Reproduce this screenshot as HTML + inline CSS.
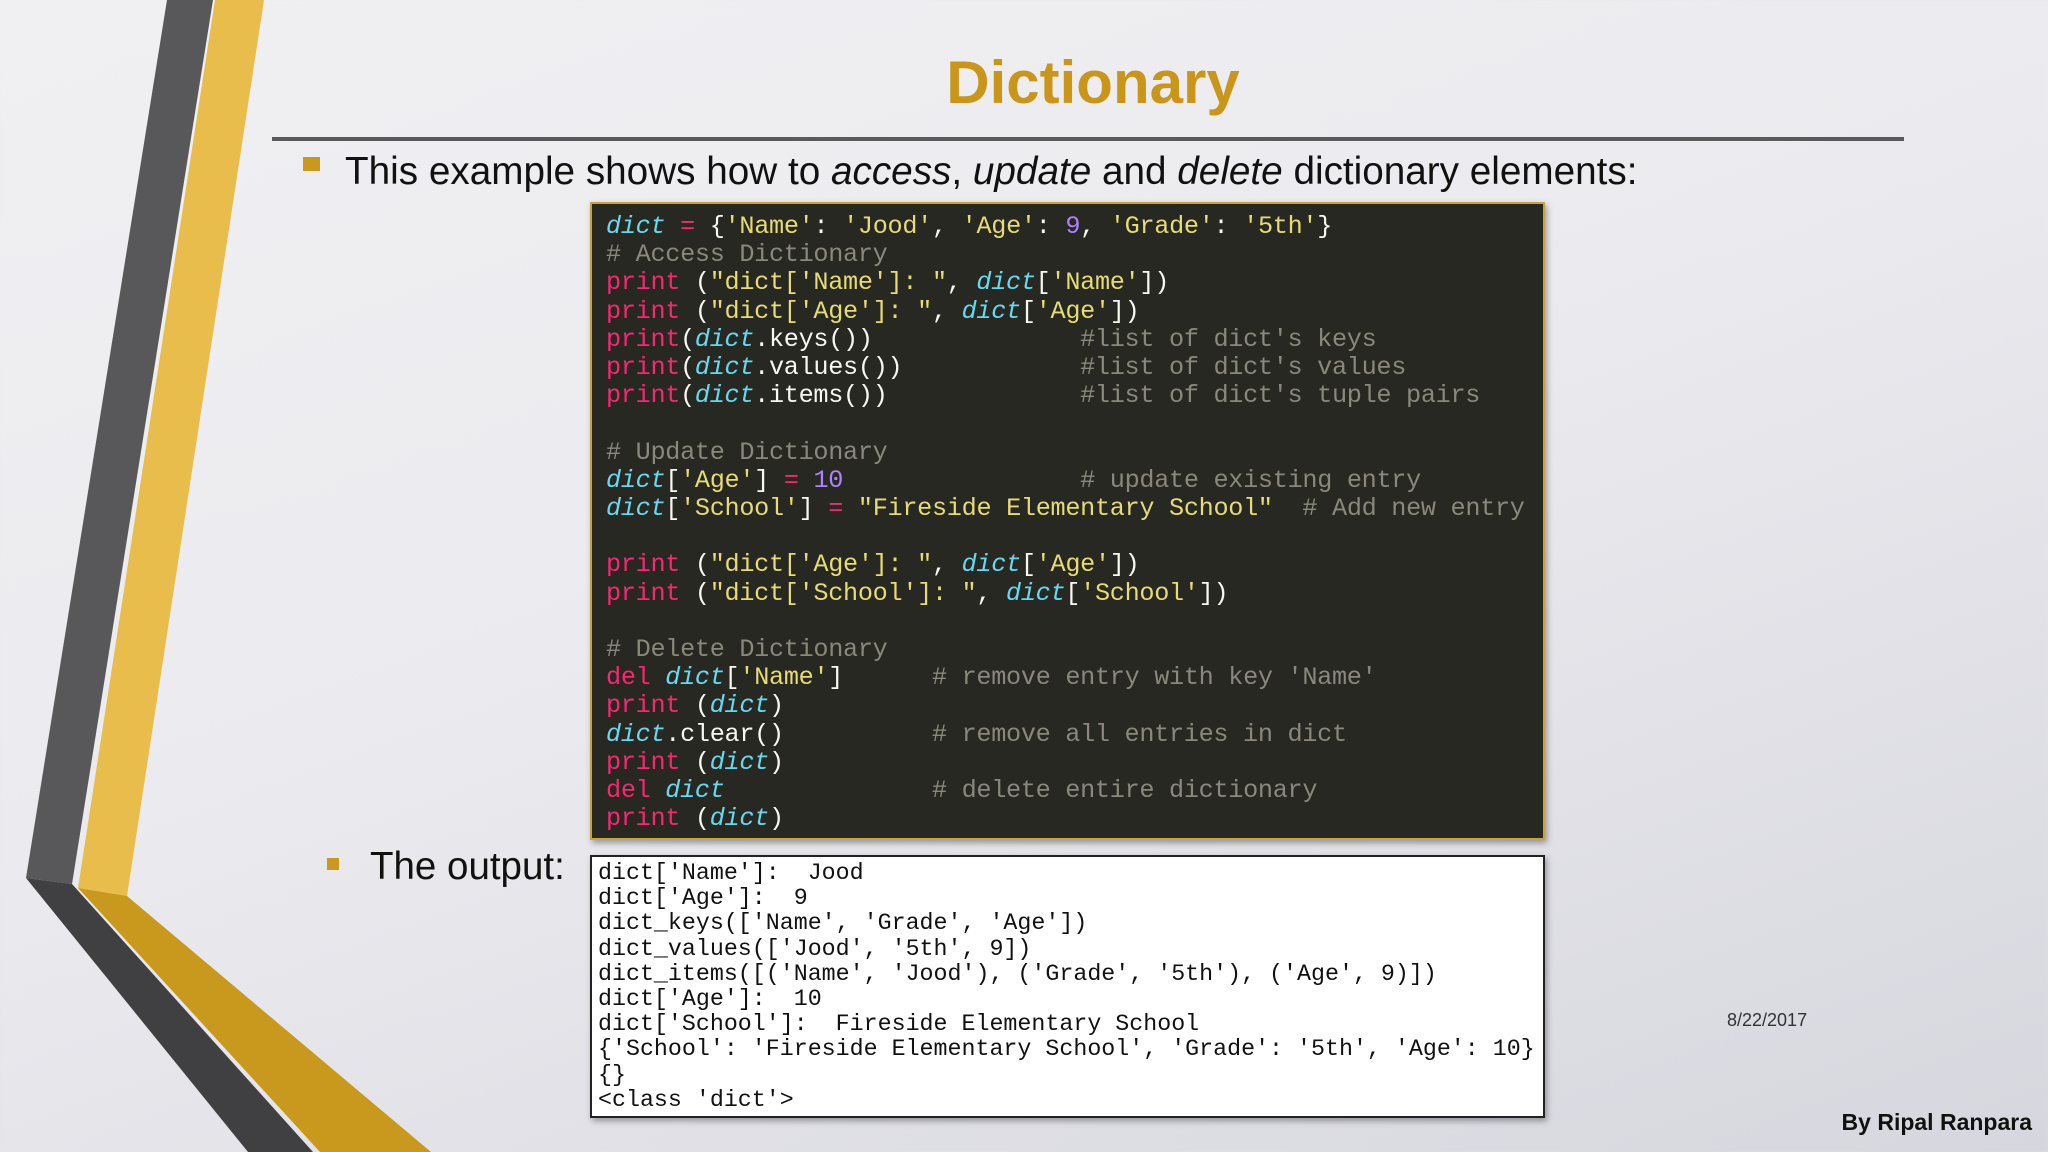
<!DOCTYPE html>
<html><head><meta charset="utf-8"><style>
*{margin:0;padding:0}
body{width:2048px;height:1152px;overflow:hidden;position:relative;background:linear-gradient(160deg,#f0f0f3 0%,#ebebef 45%,#d6d6de 100%);font-family:"Liberation Sans",sans-serif}
.abs{position:absolute}
.code{left:590px;top:202px;width:951px;height:634px;background:#272822;border:2px solid #c9a23a;box-shadow:2px 3px 6px rgba(0,0,0,.35)}
.code pre{position:absolute;left:14px;top:9px;font-family:"Liberation Mono",monospace;font-size:25.2px;letter-spacing:-0.3px;line-height:28.2px;color:#f8f8f2;white-space:pre}
.k{color:#f92672}.d{color:#66d9ef;font-style:italic}.s{color:#e6db74}.c{color:#8a887c}.n{color:#ae81ff}
.out{left:590px;top:855px;width:951px;height:259px;background:#fff;border:2px solid #222;box-shadow:2px 3px 6px rgba(0,0,0,.35)}
.out pre{position:absolute;left:6px;top:4px;font-family:"Liberation Mono",monospace;font-size:23.3px;line-height:25.2px;color:#111;white-space:pre}
</style></head><body>
<svg class="abs" style="left:0;top:0" width="600" height="1152">
<polygon points="167,0 213,0 72,884 26,878" fill="#58585b"/>
<polygon points="26,878 72,884 313,1152 248,1152" fill="#404043"/>
<polygon points="215,0 264,0 127,896 78,888" fill="#e8bd4c"/>
<polygon points="78,888 127,896 431,1152 320,1152" fill="#c9991e"/>
</svg>
<div class="abs" style="left:0;top:48px;width:2186px;text-align:center;font-size:60px;font-weight:bold;color:#c9961a">Dictionary</div>
<div class="abs" style="left:272px;top:137px;width:1632px;height:4px;background:#5a5a5c"></div>
<div class="abs" style="left:303px;top:157px;width:17px;height:14px;background:#c9991e"></div>
<div class="abs" style="left:345px;top:150px;font-size:38.7px;color:#111;white-space:nowrap">This example shows how to <i>access</i>, <i>update</i> and <i>delete</i> dictionary elements:</div>
<div class="abs code"><pre><span class="d">dict</span> <span class="k">=</span> {<span class="s">'Name'</span>: <span class="s">'Jood'</span>, <span class="s">'Age'</span>: <span class="n">9</span>, <span class="s">'Grade'</span>: <span class="s">'5th'</span>}
<span class="c"># Access Dictionary</span>
<span class="k">print</span> (<span class="s">"dict['Name']: "</span>, <span class="d">dict</span>[<span class="s">'Name'</span>])
<span class="k">print</span> (<span class="s">"dict['Age']: "</span>, <span class="d">dict</span>[<span class="s">'Age'</span>])
<span class="k">print</span>(<span class="d">dict</span>.keys())              <span class="c">#list of dict's keys</span>
<span class="k">print</span>(<span class="d">dict</span>.values())            <span class="c">#list of dict's values</span>
<span class="k">print</span>(<span class="d">dict</span>.items())             <span class="c">#list of dict's tuple pairs</span>

<span class="c"># Update Dictionary</span>
<span class="d">dict</span>[<span class="s">'Age'</span>] <span class="k">=</span> <span class="n">10</span>                <span class="c"># update existing entry</span>
<span class="d">dict</span>[<span class="s">'School'</span>] <span class="k">=</span> <span class="s">"Fireside Elementary School"</span>  <span class="c"># Add new entry</span>

<span class="k">print</span> (<span class="s">"dict['Age']: "</span>, <span class="d">dict</span>[<span class="s">'Age'</span>])
<span class="k">print</span> (<span class="s">"dict['School']: "</span>, <span class="d">dict</span>[<span class="s">'School'</span>])

<span class="c"># Delete Dictionary</span>
<span class="k">del</span> <span class="d">dict</span>[<span class="s">'Name'</span>]      <span class="c"># remove entry with key 'Name'</span>
<span class="k">print</span> (<span class="d">dict</span>)
<span class="d">dict</span>.clear()          <span class="c"># remove all entries in dict</span>
<span class="k">print</span> (<span class="d">dict</span>)
<span class="k">del</span> <span class="d">dict</span>              <span class="c"># delete entire dictionary</span>
<span class="k">print</span> (<span class="d">dict</span>)</pre></div>
<div class="abs" style="left:327px;top:858px;width:12px;height:12px;background:#c9991e"></div>
<div class="abs" style="left:370px;top:845px;font-size:38.5px;color:#111">The output:</div>
<div class="abs out"><pre>dict['Name']:  Jood
dict['Age']:  9
dict_keys(['Name', 'Grade', 'Age'])
dict_values(['Jood', '5th', 9])
dict_items([('Name', 'Jood'), ('Grade', '5th'), ('Age', 9)])
dict['Age']:  10
dict['School']:  Fireside Elementary School
{'School': 'Fireside Elementary School', 'Grade': '5th', 'Age': 10}
{}
&lt;class 'dict'&gt;</pre></div>
<div class="abs" style="left:1727px;top:1010px;font-size:18px;color:#333">8/22/2017</div>
<div class="abs" style="right:16px;top:1109px;font-size:23px;font-weight:bold;color:#111">By Ripal Ranpara</div>
</body></html>
